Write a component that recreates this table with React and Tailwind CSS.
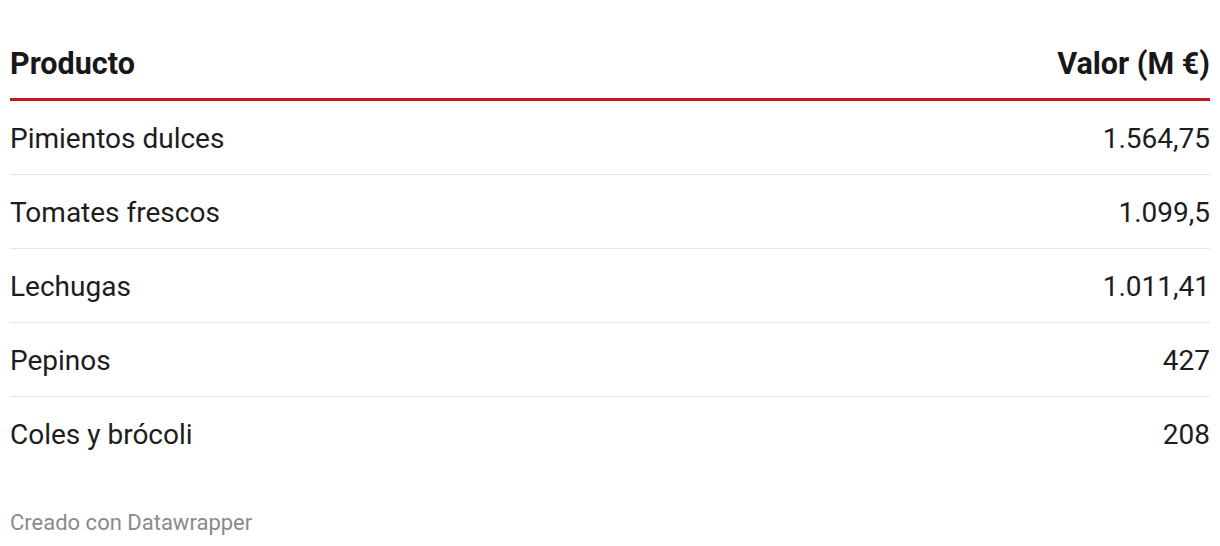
export default function App() {
  const rows = [
    ["Pimientos dulces", "1.564,75"],
    ["Tomates frescos", "1.099,5"],
    ["Lechugas", "1.011,41"],
    ["Pepinos", "427"],
    ["Coles y brócoli", "208"],
  ];
  return (
    <div className="w-[1220px] h-[546px] bg-white px-[10px] text-[#1d1d1d]" style={{ fontFamily: "Roboto, 'Liberation Sans', sans-serif" }}>
      <div className="flex justify-between items-center pt-[47px] pb-[17px] border-b-[3px] border-[#c6191e] text-[30.5px] leading-[34px] font-bold text-[#181818]">
        <span>Producto</span>
        <span>Valor (M €)</span>
      </div>
      {rows.map(([a, b], i) => (
        <div key={a} className={"flex justify-between items-center h-[74px] pt-[2px] text-[28px] " + (i < rows.length - 1 ? "border-b border-[#e5e5e5]" : "")}>
          <span>{a}</span>
          <span>{b}</span>
        </div>
      ))}
      <div className="mt-[40px] text-[22px] leading-[24px] text-[#8a8a8a]">Creado con Datawrapper</div>
    </div>
  );
}
